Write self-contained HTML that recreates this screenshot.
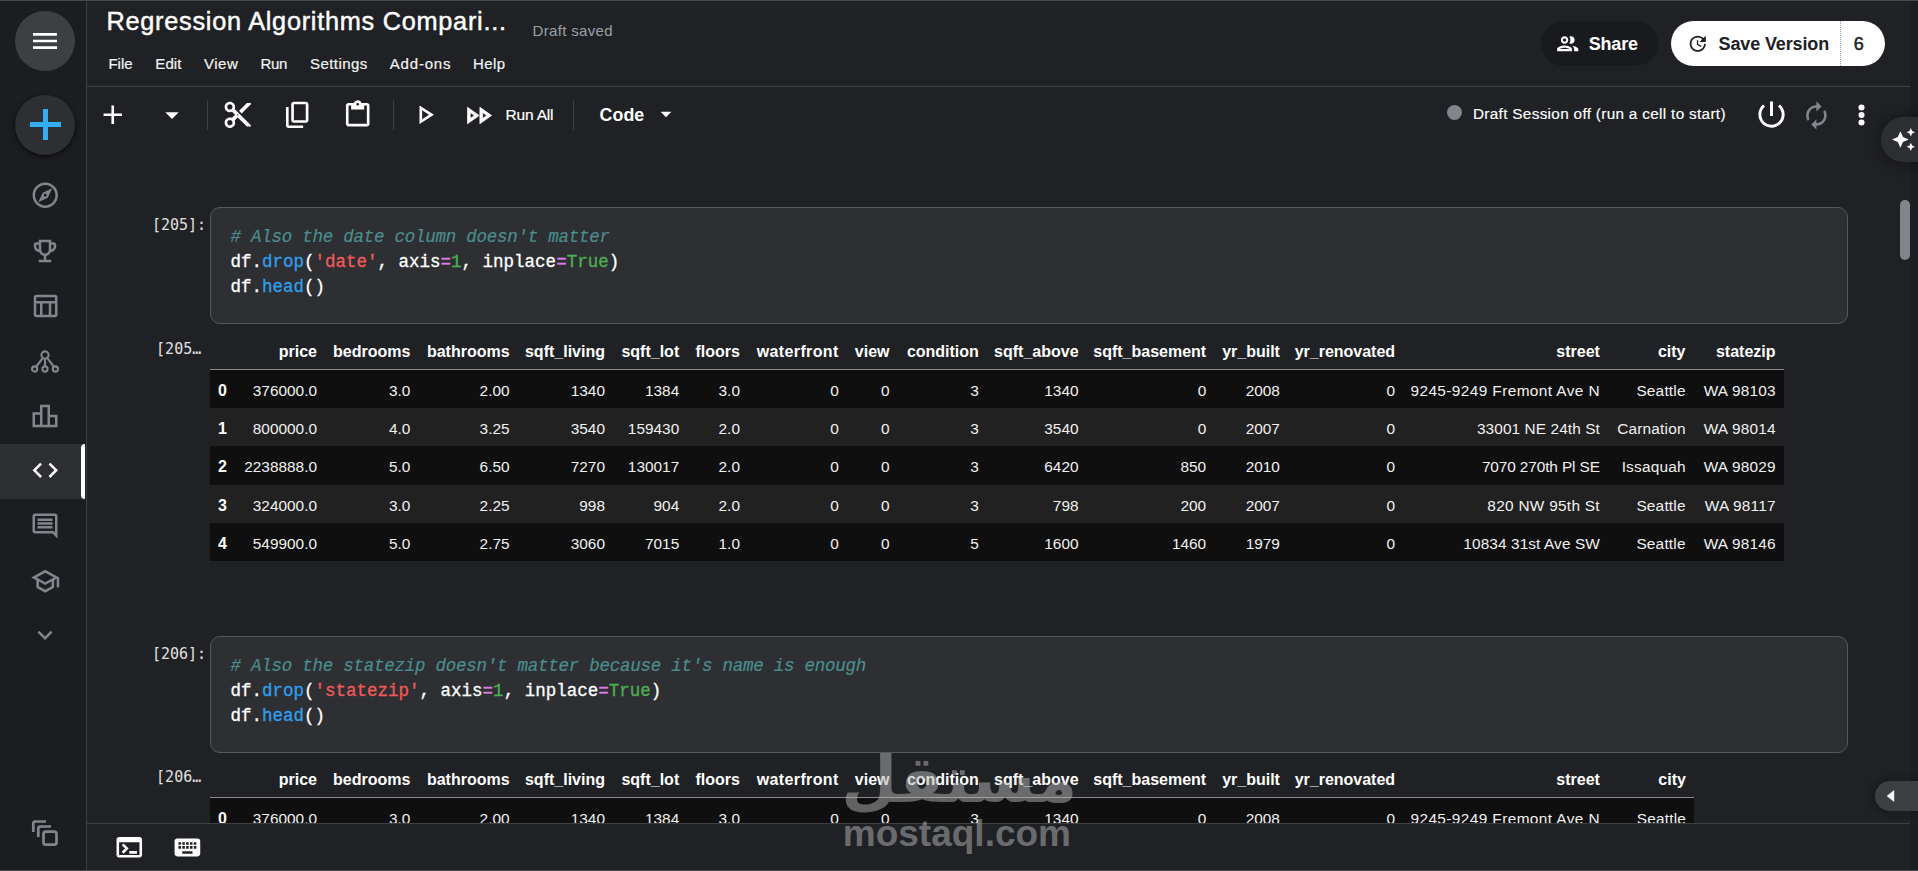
<!DOCTYPE html>
<html lang="en"><head><meta charset="utf-8"><title>Regression Algorithms Comparison - Kaggle Notebook</title>
<style>
*{box-sizing:border-box}
html,body{margin:0;padding:0;background:#202124}
body{width:1918px;height:871px;overflow:hidden;position:relative;font-family:"Liberation Sans",sans-serif}
#app{position:absolute;left:0;top:0;width:1918px;height:871px;overflow:hidden;background:#202124}
.t{position:absolute;white-space:pre;line-height:1;height:auto}
.st{display:inline-block;width:0;height:60px}
.ic{position:absolute;display:block}
.side{position:absolute;left:0;top:0;width:87px;height:871px;background:#1c1d20;border-right:1px solid #3c4043}
.circ{position:absolute;width:60px;height:60px;border-radius:50%}
.active{position:absolute;left:0;top:444px;width:85px;height:55px;background:#2e2f33}
.abar{position:absolute;left:81px;top:444px;width:4px;height:55px;background:#fff;border-radius:4px 0 0 4px}
.pill{position:absolute;border-radius:23px}
.hline{position:absolute;height:1px;background:#3c4043}
.vdiv{position:absolute;top:100px;width:1px;height:30px;background:#3c4043}
.cl{font-family:'Liberation Mono','DejaVu Sans Mono',monospace;font-size:17.5px;color:#fff}
.cm{color:#4b8d8d;font-style:italic;letter-spacing:-.25px;-webkit-text-stroke:.2px #4b8d8d}
.cell{position:absolute;left:210px;width:1638px;height:117px;background:#2e2f33;border:1px solid #56585c;border-radius:10px}
table.df{position:absolute;border-collapse:separate;border-spacing:0;table-layout:fixed;font-size:15.4px;color:#f1f1f1}
table.df th,table.df td{padding:4px 8px 0 0;text-align:right;white-space:nowrap;overflow:visible;height:38.2px;line-height:20px;vertical-align:middle}
table.df thead th{height:33px;font-size:16px;font-weight:700;color:#fff;border-bottom:1px solid #8a8a8a;padding-top:0;padding-bottom:2px}
table.df td.w1{letter-spacing:.32px;padding-right:7.7px}
table.df td.w2{letter-spacing:.2px;padding-right:7.8px}
table.df tbody th{font-size:16px;font-weight:700;color:#fff}
table.df tbody tr:nth-child(odd){background:#0f0f0f}
table.df tbody tr:nth-child(even){background:#212121}
.bbar{position:absolute;left:87px;top:823px;width:1831px;height:48px;background:#202124;border-top:1px solid #3c4043}
.rstrip{position:absolute;left:1910px;top:1px;width:8px;height:869px;background:#1c1d20}
.spark{position:absolute;left:1880.5px;top:117px;width:60px;height:45px;border-radius:22.5px;background:#2d2e31;box-shadow:0 1px 10px 5px rgba(0,0,0,.22)}
.lt{position:absolute;left:1875px;top:781px;width:60px;height:30px;border-radius:15px;background:#3c4043;box-shadow:0 0 6px 2px rgba(0,0,0,.25)}
.topline{position:absolute;left:0;top:0;width:1918px;height:1px;background:#45484d}
.botline{position:absolute;left:0;top:870px;width:1918px;height:1px;background:#45484d}
</style></head>
<body><div id="app">
<div class="side"></div>
<div class="circ" style="left:15px;top:11px;background:#3c4043"></div>
<svg class="ic" style="left:29.00px;top:25.00px;" width="32" height="32" viewBox="0 0 24 24"><path fill="#fff" d="M3 18h18v-2H3v2zm0-5h18v-2H3v2zm0-7v2h18V6H3z"/></svg>
<div class="circ" style="left:15px;top:95px;background:#2e2f33;box-shadow:0 1px 3px rgba(0,0,0,.5),0 2px 6px rgba(0,0,0,.3)"></div>
<div style="position:absolute;left:30px;top:122px;width:31px;height:5px;background:#33adf5"></div>
<div style="position:absolute;left:43px;top:109px;width:5px;height:31px;background:#33adf5"></div>
<svg class="ic" style="left:29.75px;top:180.35px;" width="30.5" height="30.5" viewBox="0 0 24 24"><path fill="#80868b" d="M12 2C6.480 2 2 6.480 2 12s4.480 10 10 10 10-4.480 10-10S17.520 2 12 2zm0 18c-4.410 0-8-3.590-8-8s3.590-8 8-8 8 3.590 8 8-3.590 8-8 8zm-5.500-2.500l7.510-3.490L17.500 6.500 9.990 9.990 6.500 17.500zm5.500-6.600c.610 0 1.100.490 1.100 1.100s-.490 1.100-1.100 1.100-1.100-.490-1.100-1.100.490-1.100 1.100-1.100z"/></svg>
<svg class="ic" style="left:30.00px;top:236.00px;" width="30" height="30" viewBox="0 0 24 24"><path fill="#80868b" d="M19 5h-2V3H7v2H5c-1.100 0-2 .900-2 2v1c0 2.550 1.920 4.630 4.390 4.940.630 1.500 1.980 2.630 3.610 2.960V19H7v2h10v-2h-4v-3.100c1.630-.330 2.980-1.460 3.610-2.960C19.080 12.630 21 10.550 21 8V7c0-1.100-.900-2-2-2zM5 8V7h2v3.820C5.840 10.400 5 9.300 5 8zm7 6c-1.650 0-3-1.350-3-3V5h6v6c0 1.650-1.350 3-3 3zm7-6c0 1.300-.840 2.400-2 2.820V7h2v1z"/></svg>
<svg class="ic" style="left:30.00px;top:290.60px;" width="30" height="30" viewBox="0 0 24 24"><path fill="#80868b" d="M20 3H5c-1.100 0-2 .900-2 2v14c0 1.100.900 2 2 2h15c1.100 0 2-.900 2-2V5c0-1.100-.900-2-2-2zm0 2v3H5V5h15zm-5 14h-5v-9h5v9zM5 10h3v9H5v-9zm12 9v-9h3v9h-3z"/></svg>
<svg class="ic" style="left:29px;top:345.5px" width="32" height="32" viewBox="0 0 32 32" fill="none" stroke="#80868b" stroke-width="2.1"><circle cx="16" cy="9" r="3.6"/><circle cx="5.600" cy="23" r="2.600"/><circle cx="16" cy="23" r="2.600"/><circle cx="26.400" cy="23" r="2.600"/><path d="M13.800 11.900L7 21M16 12.600V20.400M18.200 11.900L25 21"/></svg>
<svg class="ic" style="left:30.00px;top:401.00px;" width="30" height="30" viewBox="0 0 24 24"><path fill="#80868b" d="M16 11V3H8v6H2v12h20V11h-6zm-6-6h4v14h-4V5zm-6 6h4v8H4v-8zm16 8h-4v-6h4v6z"/></svg>
<div class="active"></div><div class="abar"></div>
<svg class="ic" style="left:29.75px;top:455.35px;" width="30.5" height="30.5" viewBox="0 0 24 24"><path fill="#fff" d="M9.4 16.6L4.8 12l4.6-4.6L8 6l-6 6 6 6 1.4-1.400zm5.200 0l4.600-4.600-4.600-4.600L16 6l6 6-6 6-1.400-1.400z"/></svg>
<svg class="ic" style="left:30.00px;top:510.50px;" width="30" height="30" viewBox="0 0 24 24"><path fill="#80868b" d="M21.99 4c0-1.100-.890-2-1.990-2H4c-1.100 0-2 .900-2 2v12c0 1.100.900 2 2 2h14l4 4-.010-18zM20 4v13.170L18.830 16H4V4h16zM6 12h12v2H6zm0-3h12v2H6zm0-3h12v2H6z"/></svg>
<svg class="ic" style="left:29.75px;top:565.75px;" width="30.5" height="30.5" viewBox="0 0 24 24"><path fill="#80868b" d="M12 3L1 9l4 2.180v6L12 21l7-3.820v-6l2-1.090V17h2V9L12 3zm6.820 6L12 12.720 5.180 9 12 5.280 18.820 9zM17 15.990l-5 2.730-5-2.730v-3.720L12 15l5-2.730v3.720z"/></svg>
<svg class="ic" style="left:30.00px;top:620.00px;" width="30" height="30" viewBox="0 0 24 24"><path fill="#80868b" d="M16.59 8.590L12 13.170 7.410 8.590 6 10l6 6 6-6z"/></svg>
<svg class="ic" style="left:30px;top:817.7px" width="30" height="30" viewBox="0 0 30 30" fill="none" stroke="#80868b" stroke-width="2.700"><path d="M3.300 14V5.500a2 2 0 0 1 2-2H16"/><path d="M8.300 19V10.500a2 2 0 0 1 2-2H21"/><rect x="13.500" y="13.700" width="13" height="13" rx="2.200"/></svg>
<div class="pill" style="left:1541px;top:20.5px;width:117px;height:45.500px;background:#191a1d"></div>
<svg class="ic" style="left:1554.85px;top:30.75px;" width="25.5" height="25.5" viewBox="0 0 24 24"><path fill="#fff" d="M9 13.75c-2.34 0-7 1.17-7 3.5V19h14v-1.75c0-2.33-4.66-3.5-7-3.5zM4.34 17c.84-.58 2.87-1.25 4.66-1.25s3.82.67 4.66 1.25H4.34zM9 12c1.93 0 3.5-1.57 3.5-3.5S10.93 5 9 5 5.5 6.57 5.5 8.5 7.07 12 9 12zm0-5c.83 0 1.5.67 1.5 1.5S9.83 10 9 10s-1.500-.67-1.500-1.500S8.170 7 9 7zm7.040 6.810c1.160.84 1.960 1.960 1.960 3.440V19h4v-1.750c0-2.020-3.500-3.170-5.960-3.440zM15 12c1.930 0 3.500-1.570 3.500-3.500S16.930 5 15 5c-.540 0-1.040.130-1.500.350.630.890 1 1.980 1 3.150s-.370 2.260-1 3.150c.460.220.960.350 1.500.350z"/></svg>
<div class="pill" style="left:1670.5px;top:20.5px;width:214.500px;height:45.500px;background:#fff"></div>
<div style="position:absolute;left:1840px;top:20.5px;width:0;height:45.500px;border-left:1px dotted #9aa0a6"></div>
<svg class="ic" style="left:1686.55px;top:32.55px;" width="21.5" height="21.5" viewBox="0 0 24 24"><path fill="#202124" d="M11 8v5l4.250 2.520.770-1.280-3.520-2.090V8H11zm10 2V3l-2.640 2.640C16.740 4.010 14.490 3 12 3c-4.970 0-9 4.030-9 9s4.030 9 9 9 9-4.030 9-9h-2c0 3.860-3.140 7-7 7s-7-3.140-7-7 3.140-7 7-7c1.930 0 3.680.790 4.950 2.050L14 10h7z"/></svg>
<div class="hline" style="left:87px;top:86px;width:1823px"></div>
<svg class="ic" style="left:96.50px;top:99.25px;" width="31.5" height="31.5" viewBox="0 0 24 24"><path fill="#fff" d="M19 13h-6v6h-2v-6H5v-2h6V5h2v6h6v2z"/></svg>
<svg class="ic" style="left:156.25px;top:99.00px;" width="32" height="32" viewBox="0 0 24 24"><path fill="#fff" d="M7 10l5 5 5-5z"/></svg>
<div class="vdiv" style="left:207px"></div>
<svg class="ic" style="left:222.25px;top:99.25px;" width="31.5" height="31.5" viewBox="0 0 24 24"><path fill="#fff" d="M9.64 7.64c.23-.5.36-1.05.36-1.64 0-2.21-1.79-4-4-4S2 3.79 2 6s1.79 4 4 4c.59 0 1.14-.13 1.64-.36L10 12l-2.36 2.36C7.14 14.13 6.59 14 6 14c-2.21 0-4 1.79-4 4s1.79 4 4 4 4-1.79 4-4c0-.59-.13-1.14-.36-1.64L12 14l7 7h3v-1L9.64 7.64zM6 8c-1.1 0-2-.89-2-2s.9-2 2-2 2 .89 2 2-.9 2-2 2zm0 12c-1.1 0-2-.89-2-2s.9-2 2-2 2 .89 2 2-.9 2-2 2zm6-7.5c-.28 0-.5-.22-.5-.5s.22-.5.5-.5.5.22.5.5-.22.5-.5.5zM19 3l-6 6 2 2 7-7V3z"/></svg>
<svg class="ic" style="left:282.15px;top:99.15px;" width="31.7" height="31.7" viewBox="0 0 24 24"><path fill="#fff" d="M9 18q-.825 0-1.413-.587T7 16V4q0-.825.587-1.413T9 2h9q.825 0 1.413.587T20 4v12q0 .825-.587 1.413T18 18H9Zm0-2h9V4H9v12Zm-4 6q-.825 0-1.413-.587T3 20V6h2v14h11v2H5Z"/></svg>
<svg class="ic" style="left:342.30px;top:99.30px;" width="31.4" height="31.4" viewBox="0 0 24 24"><path fill="#fff" d="M5 21q-.825 0-1.413-.587T3 19V5q0-.825.587-1.413T5 3h4.175q.275-.875 1.075-1.438T12 1q1 0 1.788.563T14.850 3H19q.825 0 1.413.587T21 5v14q0 .825-.587 1.413T19 21H5Zm0-2h14V5h-2v3H7V5H5v14Zm7-14q.425 0 .713-.288T13 4q0-.425-.288-.713T12 3q-.425 0-.713.288T11 4q0 .425.288.713T12 5Z"/></svg>
<div class="vdiv" style="left:393px"></div>
<svg class="ic" style="left:409.25px;top:99.25px;" width="31.5" height="31.5" viewBox="0 0 24 24"><path fill="#fff" d="M10 8.64L15.27 12 10 15.36V8.64M8 5v14l11-7L8 5z"/></svg>
<svg class="ic" style="left:461.70px;top:98.50px;" width="33" height="33" viewBox="0 0 24 24"><path fill="#fff" stroke="#fff" stroke-width="0.5" stroke-linejoin="round" d="M15 9.86L18.03 12 15 14.14V9.86m-9 0L9.03 12 6 14.14V9.86M13 6v12l8.5-6L13 6zM4 6v12l8.5-6L4 6z"/></svg>
<div class="vdiv" style="left:573px"></div>
<svg class="ic" style="left:652.60px;top:100.80px;" width="26" height="26" viewBox="0 0 24 24"><path fill="#fff" d="M7 10l5 5 5-5z"/></svg>
<div style="position:absolute;left:1446.750px;top:105px;width:15px;height:15px;border-radius:50%;background:#80868b"></div>
<svg class="ic" style="left:1753.80px;top:97.40px;" width="35" height="35" viewBox="0 0 24 24"><path fill="#fff" d="M13 3h-2v10h2V3zm4.83 2.17l-1.42 1.42C17.99 7.86 19 9.81 19 12c0 3.87-3.13 7-7 7s-7-3.13-7-7c0-2.19 1.01-4.14 2.58-5.42L6.17 5.17C4.23 6.82 3 9.26 3 12c0 4.97 4.03 9 9 9s9-4.03 9-9c0-2.74-1.23-5.18-3.17-6.83z"/></svg>
<svg class="ic" style="left:1800.90px;top:99.50px;" width="30.8" height="30.8" viewBox="0 0 24 24"><path fill="#80868b" d="M12 6v3l4-4-4-4v3c-4.42 0-8 3.58-8 8 0 1.57.46 3.03 1.24 4.26L6.7 14.8c-.45-.83-.7-1.79-.7-2.8 0-3.31 2.69-6 6-6zm6.76 1.74L17.3 9.2c.44.84.7 1.79.7 2.8 0 3.31-2.69 6-6 6v-3l-4 4 4 4v-3c4.42 0 8-3.58 8-8 0-1.57-.46-3.03-1.24-4.26z"/></svg>
<svg class="ic" style="left:1856px;top:100px" width="12" height="30" viewBox="0 0 12 30" fill="#fff"><circle cx="5.500" cy="7.500" r="3.050"/><circle cx="5.500" cy="15" r="3.050"/><circle cx="5.500" cy="22.500" r="3.050"/></svg>
<div class="cell" style="top:207px"><div class="t cl" style="left:19.5px;top:-26.25px"><i class="st"></i><span class="cm"># Also the date column doesn&#x27;t matter</span></div><div class="t cl" style="left:19.5px;top:-1.25px"><i class="st"></i><span style="color:#fff;-webkit-text-stroke:0.3px #fff">df.</span><span style="color:#2e9fee;-webkit-text-stroke:0.3px #2e9fee">drop</span><span style="color:#fff;-webkit-text-stroke:0.3px #fff">(</span><span style="color:#f05a58;-webkit-text-stroke:0.3px #f05a58">&#x27;date&#x27;</span><span style="color:#fff;-webkit-text-stroke:0.3px #fff">, axis</span><span style="color:#d77ee0;-webkit-text-stroke:0.3px #d77ee0">=</span><span style="color:#4caf50;-webkit-text-stroke:0.3px #4caf50">1</span><span style="color:#fff;-webkit-text-stroke:0.3px #fff">, inplace</span><span style="color:#d77ee0;-webkit-text-stroke:0.3px #d77ee0">=</span><span style="color:#4caf50;-webkit-text-stroke:0.3px #4caf50">True</span><span style="color:#fff;-webkit-text-stroke:0.3px #fff">)</span></div><div class="t cl" style="left:19.5px;top:23.75px"><i class="st"></i><span style="color:#fff;-webkit-text-stroke:0.3px #fff">df.</span><span style="color:#2e9fee;-webkit-text-stroke:0.3px #2e9fee">head</span><span style="color:#fff;-webkit-text-stroke:0.3px #fff">()</span></div></div>
<div class="cell" style="top:636px"><div class="t cl" style="left:19.5px;top:-26.25px"><i class="st"></i><span class="cm"># Also the statezip doesn&#x27;t matter because it&#x27;s name is enough</span></div><div class="t cl" style="left:19.5px;top:-1.25px"><i class="st"></i><span style="color:#fff;-webkit-text-stroke:0.3px #fff">df.</span><span style="color:#2e9fee;-webkit-text-stroke:0.3px #2e9fee">drop</span><span style="color:#fff;-webkit-text-stroke:0.3px #fff">(</span><span style="color:#f05a58;-webkit-text-stroke:0.3px #f05a58">&#x27;statezip&#x27;</span><span style="color:#fff;-webkit-text-stroke:0.3px #fff">, axis</span><span style="color:#d77ee0;-webkit-text-stroke:0.3px #d77ee0">=</span><span style="color:#4caf50;-webkit-text-stroke:0.3px #4caf50">1</span><span style="color:#fff;-webkit-text-stroke:0.3px #fff">, inplace</span><span style="color:#d77ee0;-webkit-text-stroke:0.3px #d77ee0">=</span><span style="color:#4caf50;-webkit-text-stroke:0.3px #4caf50">True</span><span style="color:#fff;-webkit-text-stroke:0.3px #fff">)</span></div><div class="t cl" style="left:19.5px;top:23.75px"><i class="st"></i><span style="color:#fff;-webkit-text-stroke:0.3px #fff">df.</span><span style="color:#2e9fee;-webkit-text-stroke:0.3px #2e9fee">head</span><span style="color:#fff;-webkit-text-stroke:0.3px #fff">()</span></div></div>
<table class="df" style="left:210px;top:337.00px;width:1573.50px"><colgroup><col style="width:25.00px"><col style="width:90.00px"><col style="width:93.40px"><col style="width:99.20px"><col style="width:95.40px"><col style="width:74.25px"><col style="width:60.75px"><col style="width:98.75px"><col style="width:50.75px"><col style="width:89.40px"><col style="width:99.70px"><col style="width:127.65px"><col style="width:73.75px"><col style="width:115.20px"><col style="width:204.80px"><col style="width:85.60px"><col style="width:89.90px"></colgroup><thead><tr><th></th><th>price</th><th>bedrooms</th><th>bathrooms</th><th>sqft_living</th><th>sqft_lot</th><th>floors</th><th style="letter-spacing:.38px">waterfront</th><th>view</th><th>condition</th><th>sqft_above</th><th>sqft_basement</th><th>yr_built</th><th>yr_renovated</th><th>street</th><th>city</th><th>statezip</th></tr></thead><tbody><tr><th>0</th><td>376000.0</td><td>3.0</td><td>2.00</td><td>1340</td><td>1384</td><td>3.0</td><td>0</td><td>0</td><td>3</td><td>1340</td><td>0</td><td>2008</td><td>0</td><td style="letter-spacing:0.4px">9245-9249 Fremont Ave N</td><td class="w2">Seattle</td><td class="w2">WA 98103</td></tr><tr><th>1</th><td>800000.0</td><td>4.0</td><td>3.25</td><td>3540</td><td>159430</td><td>2.0</td><td>0</td><td>0</td><td>3</td><td>3540</td><td>0</td><td>2007</td><td>0</td><td style="letter-spacing:0.09px">33001 NE 24th St</td><td class="w2">Carnation</td><td class="w2">WA 98014</td></tr><tr><th>2</th><td>2238888.0</td><td>5.0</td><td>6.50</td><td>7270</td><td>130017</td><td>2.0</td><td>0</td><td>0</td><td>3</td><td>6420</td><td>850</td><td>2010</td><td>0</td><td style="letter-spacing:-0.11px">7070 270th Pl SE</td><td class="w2">Issaquah</td><td class="w2">WA 98029</td></tr><tr><th>3</th><td>324000.0</td><td>3.0</td><td>2.25</td><td>998</td><td>904</td><td>2.0</td><td>0</td><td>0</td><td>3</td><td>798</td><td>200</td><td>2007</td><td>0</td><td style="letter-spacing:0.28px">820 NW 95th St</td><td class="w2">Seattle</td><td class="w2">WA 98117</td></tr><tr><th>4</th><td>549900.0</td><td>5.0</td><td>2.75</td><td>3060</td><td>7015</td><td>1.0</td><td>0</td><td>0</td><td>5</td><td>1600</td><td>1460</td><td>1979</td><td>0</td><td style="letter-spacing:0.1px">10834 31st Ave SW</td><td class="w2">Seattle</td><td class="w2">WA 98146</td></tr></tbody></table>
<table class="df" style="left:210px;top:765.00px;width:1483.90px"><colgroup><col style="width:25.00px"><col style="width:90.00px"><col style="width:93.40px"><col style="width:99.20px"><col style="width:95.40px"><col style="width:74.25px"><col style="width:60.75px"><col style="width:98.75px"><col style="width:50.75px"><col style="width:89.40px"><col style="width:99.70px"><col style="width:127.65px"><col style="width:73.75px"><col style="width:115.20px"><col style="width:204.80px"><col style="width:85.90px"></colgroup><thead><tr><th></th><th>price</th><th>bedrooms</th><th>bathrooms</th><th>sqft_living</th><th>sqft_lot</th><th>floors</th><th style="letter-spacing:.38px">waterfront</th><th>view</th><th>condition</th><th>sqft_above</th><th>sqft_basement</th><th>yr_built</th><th>yr_renovated</th><th>street</th><th>city</th></tr></thead><tbody><tr><th>0</th><td>376000.0</td><td>3.0</td><td>2.00</td><td>1340</td><td>1384</td><td>3.0</td><td>0</td><td>0</td><td>3</td><td>1340</td><td>0</td><td>2008</td><td>0</td><td style="letter-spacing:0.4px">9245-9249 Fremont Ave N</td><td class="w2">Seattle</td></tr></tbody></table>
<div class="bbar"></div>
<svg class="ic" style="left:114.00px;top:831.60px;" width="30.6" height="30.6" viewBox="0 0 24 24"><path fill="#fff" d="M20 4H4c-1.110 0-2 .900-2 2v12c0 1.100.890 2 2 2h16c1.100 0 2-.900 2-2V6c0-1.100-.890-2-2-2zm0 14H4V8h16v10zm-2-1h-6v-2h6v2zM7.500 17l-1.410-1.410L8.670 13l-2.590-2.590L7.500 9l4 4-4 4z"/></svg>
<svg class="ic" style="left:171.90px;top:831.50px;" width="30.8" height="30.8" viewBox="0 0 24 24"><path fill="#fff" d="M20 5H4c-1.100 0-1.990.900-1.990 2L2 17c0 1.100.900 2 2 2h16c1.100 0 2-.900 2-2V7c0-1.100-.900-2-2-2zm-9 3h2v2h-2V8zm0 3h2v2h-2v-2zM8 8h2v2H8V8zm0 3h2v2H8v-2zm-1 2H5v-2h2v2zm0-3H5V8h2v2zm9 7H8v-2h8v2zm0-4h-2v-2h2v2zm0-3h-2V8h2v2zm3 3h-2v-2h2v2zm0-3h-2V8h2v2z"/></svg>
<div class="rstrip"></div>
<div style="position:absolute;left:1900px;top:200px;width:10px;height:60px;border-radius:5px;background:#80868b"></div>
<div class="spark"></div>
<svg class="ic" style="left:1890.60px;top:126.90px;" width="25" height="25" viewBox="0 0 24 24"><path fill="#fff" d="M19 9l1.250-2.750L23 5l-2.750-1.250L19 1l-1.250 2.750L15 5l2.750 1.250L19 9zm-7.500.500L9 4 6.500 9.500 1 12l5.500 2.500L9 20l2.500-5.500L17 12l-5.500-2.500zM19 15l-1.250 2.750L15 19l2.750 1.250L19 23l1.250-2.750L23 19l-2.750-1.250L19 15z"/></svg>
<div class="lt"></div>
<svg class="ic" style="left:1886px;top:789px" width="9" height="14" viewBox="0 0 9 14"><path fill="#f1f3f4" d="M8.200 .900v12.200L.700 7z"/></svg>
<div class="topline"></div><div class="botline"></div>
<div class="t" style="left:106.50px;top:-30.00px;font-size:25.3px;color:#fff;font-weight:400;letter-spacing:0.732px;font-family:'Liberation Sans', sans-serif;font-style:normal;-webkit-text-stroke:0.45px #fff;"><i class="st"></i>Regression Algorithms Compari...</div>
<div class="t" style="left:532.50px;top:-23.75px;font-size:15px;color:#9aa0a6;font-weight:400;letter-spacing:0.330px;font-family:'Liberation Sans', sans-serif;font-style:normal;"><i class="st"></i>Draft saved</div>
<div class="t" style="left:108.50px;top:8.75px;font-size:15px;color:#f1f3f4;font-weight:400;letter-spacing:-0.057px;font-family:'Liberation Sans', sans-serif;font-style:normal;-webkit-text-stroke:0.2px #f1f3f4;"><i class="st"></i>File</div>
<div class="t" style="left:155.25px;top:8.75px;font-size:15px;color:#f1f3f4;font-weight:400;letter-spacing:0.130px;font-family:'Liberation Sans', sans-serif;font-style:normal;-webkit-text-stroke:0.2px #f1f3f4;"><i class="st"></i>Edit</div>
<div class="t" style="left:204.00px;top:8.75px;font-size:15px;color:#f1f3f4;font-weight:400;letter-spacing:0.500px;font-family:'Liberation Sans', sans-serif;font-style:normal;-webkit-text-stroke:0.2px #f1f3f4;"><i class="st"></i>View</div>
<div class="t" style="left:260.50px;top:8.75px;font-size:15px;color:#f1f3f4;font-weight:400;letter-spacing:-0.391px;font-family:'Liberation Sans', sans-serif;font-style:normal;-webkit-text-stroke:0.2px #f1f3f4;"><i class="st"></i>Run</div>
<div class="t" style="left:310.00px;top:8.75px;font-size:15px;color:#f1f3f4;font-weight:400;letter-spacing:0.435px;font-family:'Liberation Sans', sans-serif;font-style:normal;-webkit-text-stroke:0.2px #f1f3f4;"><i class="st"></i>Settings</div>
<div class="t" style="left:389.75px;top:8.75px;font-size:15px;color:#f1f3f4;font-weight:400;letter-spacing:0.812px;font-family:'Liberation Sans', sans-serif;font-style:normal;-webkit-text-stroke:0.2px #f1f3f4;"><i class="st"></i>Add-ons</div>
<div class="t" style="left:473.00px;top:8.75px;font-size:15px;color:#f1f3f4;font-weight:400;letter-spacing:0.380px;font-family:'Liberation Sans', sans-serif;font-style:normal;-webkit-text-stroke:0.2px #f1f3f4;"><i class="st"></i>Help</div>
<div class="t" style="left:1588.75px;top:-10.00px;font-size:18px;color:#fff;font-weight:700;letter-spacing:-0.195px;font-family:'Liberation Sans', sans-serif;font-style:normal;"><i class="st"></i>Share</div>
<div class="t" style="left:1718.50px;top:-10.00px;font-size:18px;color:#202124;font-weight:700;letter-spacing:-0.121px;font-family:'Liberation Sans', sans-serif;font-style:normal;"><i class="st"></i>Save Version</div>
<div class="t" style="left:1853.75px;top:-10.00px;font-size:18px;color:#202124;font-weight:400;letter-spacing:0.484px;font-family:'Liberation Sans', sans-serif;font-style:normal;-webkit-text-stroke:0.5px #202124;"><i class="st"></i>6</div>
<div class="t" style="left:505.50px;top:60.00px;font-size:15.5px;color:#fff;font-weight:400;letter-spacing:-0.188px;font-family:'Liberation Sans', sans-serif;font-style:normal;-webkit-text-stroke:0.2px #fff;"><i class="st"></i>Run All</div>
<div class="t" style="left:599.50px;top:60.75px;font-size:17.8px;color:#fff;font-weight:700;letter-spacing:0.099px;font-family:'Liberation Sans', sans-serif;font-style:normal;"><i class="st"></i>Code</div>
<div class="t" style="left:1473.00px;top:59.25px;font-size:15.3px;color:#fff;font-weight:400;letter-spacing:0.320px;font-family:'Liberation Sans', sans-serif;font-style:normal;-webkit-text-stroke:0.15px #fff;"><i class="st"></i>Draft Session off (run a cell to start)</div>
<div class="t" style="left:151.90px;top:170.00px;font-size:15px;color:#e0e0e0;font-weight:400;letter-spacing:0.000px;font-family:'DejaVu Sans Mono', 'Liberation Mono', monospace;font-style:normal;"><i class="st"></i>[205]:</div>
<div class="t" style="left:151.90px;top:599.00px;font-size:15px;color:#e0e0e0;font-weight:400;letter-spacing:0.000px;font-family:'DejaVu Sans Mono', 'Liberation Mono', monospace;font-style:normal;"><i class="st"></i>[206]:</div>
<div class="t" style="left:156.10px;top:293.80px;font-size:15px;color:#e0e0e0;font-weight:400;letter-spacing:0.000px;font-family:'DejaVu Sans Mono', 'Liberation Mono', monospace;font-style:normal;"><i class="st"></i>[205…</div>
<div class="t" style="left:156.10px;top:721.80px;font-size:15px;color:#e0e0e0;font-weight:400;letter-spacing:0.000px;font-family:'DejaVu Sans Mono', 'Liberation Mono', monospace;font-style:normal;"><i class="st"></i>[206…</div>
<div class="t" style="left:841.20px;top:741.50px;font-size:64.5px;color:#b4b4b4;font-weight:700;letter-spacing:0.000px;font-family:'DejaVu Sans', sans-serif;font-style:normal;opacity:.5;direction:rtl;z-index:50;"><i class="st"></i>مستقل</div>
<div class="t" style="left:842.80px;top:786.00px;font-size:37px;color:#b4b4b4;font-weight:700;letter-spacing:0.000px;font-family:'Liberation Sans', sans-serif;font-style:normal;opacity:.5;z-index:50;"><i class="st"></i>mostaql.com</div>
</div></body></html>
